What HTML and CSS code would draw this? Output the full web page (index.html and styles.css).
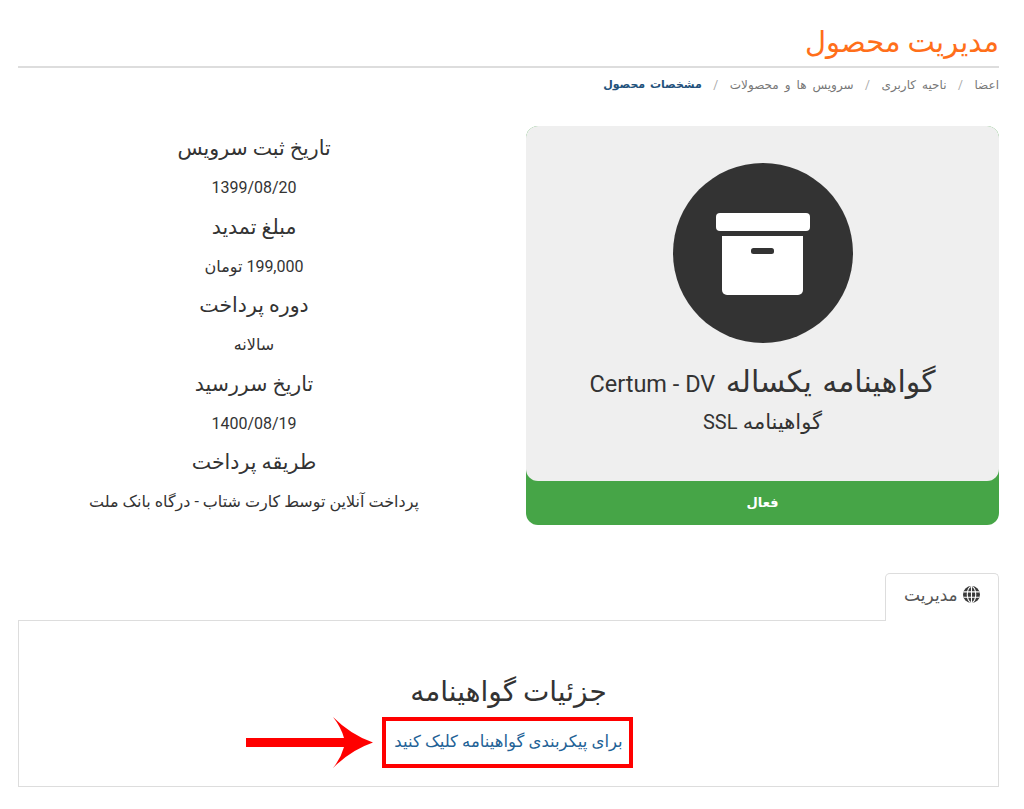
FILE: index.html
```html
<!DOCTYPE html>
<html lang="fa" dir="rtl">

<head>
    <meta charset="UTF-8">
    <title>مدیریت محصول</title>
    <link rel="stylesheet" href="styles.css">
</head>

<body>

    <!-- page header -->
    <h1 class="page-title">مدیریت محصول</h1>
    <ul class="breadcrumb">
        <li>اعضا</li>
        <li class="sep">/</li>
        <li>ناحیه کاربری</li>
        <li class="sep">/</li>
        <li>سرویس ها و محصولات</li>
        <li class="sep">/</li>
        <li class="active">مشخصات محصول</li>
    </ul>

    <div class="product-row">
        <!-- product card -->
        <div class="product-card">
            <div class="product-top">
                <div class="product-icon">
                    <svg width="94" height="82" viewBox="0 0 94 82">
                        <rect x="0" y="0" width="94" height="18" rx="4" fill="#fff" />
                        <path d="M6 23H87V77a5 5 0 0 1-5 5H11a5 5 0 0 1-5-5Z" fill="#fff" />
                        <rect x="35" y="35" width="23" height="6" rx="2.5" fill="#333" />
                    </svg>
                </div>
                <h3 class="product-name">گواهینامه یکساله <span class="latin">Certum - DV</span></h3>
                <div class="product-group">گواهینامه <span class="latin">SSL</span></div>
            </div>
            <div class="product-status">فعال</div>
        </div>

        <!-- service info -->
        <div class="product-info">
            <h4>تاریخ ثبت سرویس</h4>
            <p>1399/08/20</p>
            <h4>مبلغ تمدید</h4>
            <p>199,000 تومان</p>
            <h4>دوره پرداخت</h4>
            <p>سالانه</p>
            <h4>تاریخ سررسید</h4>
            <p>1400/08/19</p>
            <h4>طریقه پرداخت</h4>
            <p>پرداخت آنلاین توسط کارت شتاب - درگاه بانک ملت</p>
        </div>
    </div>

    <!-- tabs -->
    <div class="tabs">
        <div class="tab">
            <svg class="globe" width="17" height="17" viewBox="0 0 16 16">
                <circle cx="8" cy="8" r="8" fill="#3a3a3a" />
                <path d="M8 0.5V15.5M0.5 5.5H15.5M0.5 10.5H15.5" stroke="#fff" stroke-width="1" fill="none" />
                <ellipse cx="8" cy="8" rx="4" ry="7.5" stroke="#fff" stroke-width="1" fill="none" />
            </svg>
            مدیریت
        </div>
    </div>
    <div class="tab-panel">
        <h3>جزئیات گواهینامه</h3>
        <div class="link-row">
            <a class="config-link" href="#">برای پیکربندی گواهینامه کلیک کنید</a>
            <svg class="arrow" width="127" height="51" viewBox="0 0 127 51">
                <path d="M0 21H98Q95 10 87 0Q105 18 127 25.5Q105 33 87 51Q95 41 98 30H0Z" fill="#f00" />
            </svg>
        </div>
    </div>

</body>

</html>
```

FILE: styles.css
```css
* {
    margin: 0;
    padding: 0;
    box-sizing: border-box;
}

body {
    font-family: Roboto, "DejaVu Sans", sans-serif;
    background: white;
    color: #333;
    padding: 0 25px 0 18px;
}

/* Page header */
.page-title {
    height: 68px;
    padding-top: 22px;
    border-bottom: 2px solid #ddd;
    color: #ff6f1a;
    font-size: 29px;
    font-weight: normal;
    line-height: 40px;
}

.breadcrumb {
    display: flex;
    gap: 11.5px;
    list-style: none;
    height: 58px;
    padding-top: 8px;
    color: #777;
    font-size: 12px;
    word-spacing: 3px;
    line-height: 18px;
}

.breadcrumb .sep {
    color: #aaa;
}

.breadcrumb .active {
    color: #23527c;
    font-size: 11px;
    font-weight: bold;
    word-spacing: 2px;
}

/* Product row */
.product-row {
    display: flex;
    gap: 36px;
}

.product-card {
    width: 473px;
    height: 399px;
    background: #46a547;
    border-radius: 12px;
    flex-shrink: 0;
}

.product-top {
    height: 355px;
    background: #efefef;
    border-radius: 12px;
    padding-top: 37px;
    text-align: center;
}

.product-icon {
    display: flex;
    justify-content: center;
    align-items: center;
    width: 180px;
    height: 180px;
    margin: 0 auto;
    padding-top: 2px;
    background: #333;
    border-radius: 50%;
}

.product-name {
    margin-top: 22px;
    font-size: 30px;
    font-weight: normal;
    word-spacing: 3px;
    line-height: 34px;
}

.product-name .latin {
    font-size: 23.5px;
    word-spacing: 0;
}

.product-group {
    margin-top: 8px;
    font-size: 21px;
    line-height: 26px;
}

.product-group .latin {
    font-size: 20px;
}

.product-status {
    height: 44px;
    color: white;
    font-size: 13px;
    font-weight: bold;
    line-height: 44px;
    text-align: center;
}

.product-info {
    flex: 1;
    text-align: center;
}

.product-info h4 {
    height: 44px;
    font-size: 20.5px;
    font-weight: normal;
    line-height: 44px;
}

.product-info p {
    height: 34.5px;
    padding-top: 1px;
    font-size: 16px;
    line-height: 34px;
}

/* Tabs */
.tabs {
    display: flex;
    margin-top: 48px;
}

.tab {
    width: 114px;
    height: 48px;
    margin-bottom: -1px;
    position: relative;
    background: white;
    border: 1px solid #ddd;
    border-bottom: none;
    border-radius: 5px 5px 0 0;
    color: #555;
    font-size: 17px;
    line-height: 42px;
    text-align: center;
}

.globe {
    vertical-align: -2px;
    margin-left: 1px;
}

.tab-panel {
    height: 167px;
    padding-top: 54px;
    border: 1px solid #ddd;
    text-align: center;
}

.tab-panel h3 {
    font-size: 28px;
    font-weight: normal;
    line-height: 34px;
}

.link-row {
    display: flex;
    justify-content: center;
    position: relative;
    margin-top: 8px;
}

.config-link {
    display: block;
    width: 251px;
    height: 51px;
    margin-right: 3px;
    padding-left: 3px;
    border: 4px solid #f00;
    color: #1f6296;
    font-size: 16.5px;
    line-height: 41px;
    text-decoration: none;
}

/* annotation arrow drawn over the panel */
.arrow {
    position: absolute;
    left: 227px;
    top: 0;
}
```
